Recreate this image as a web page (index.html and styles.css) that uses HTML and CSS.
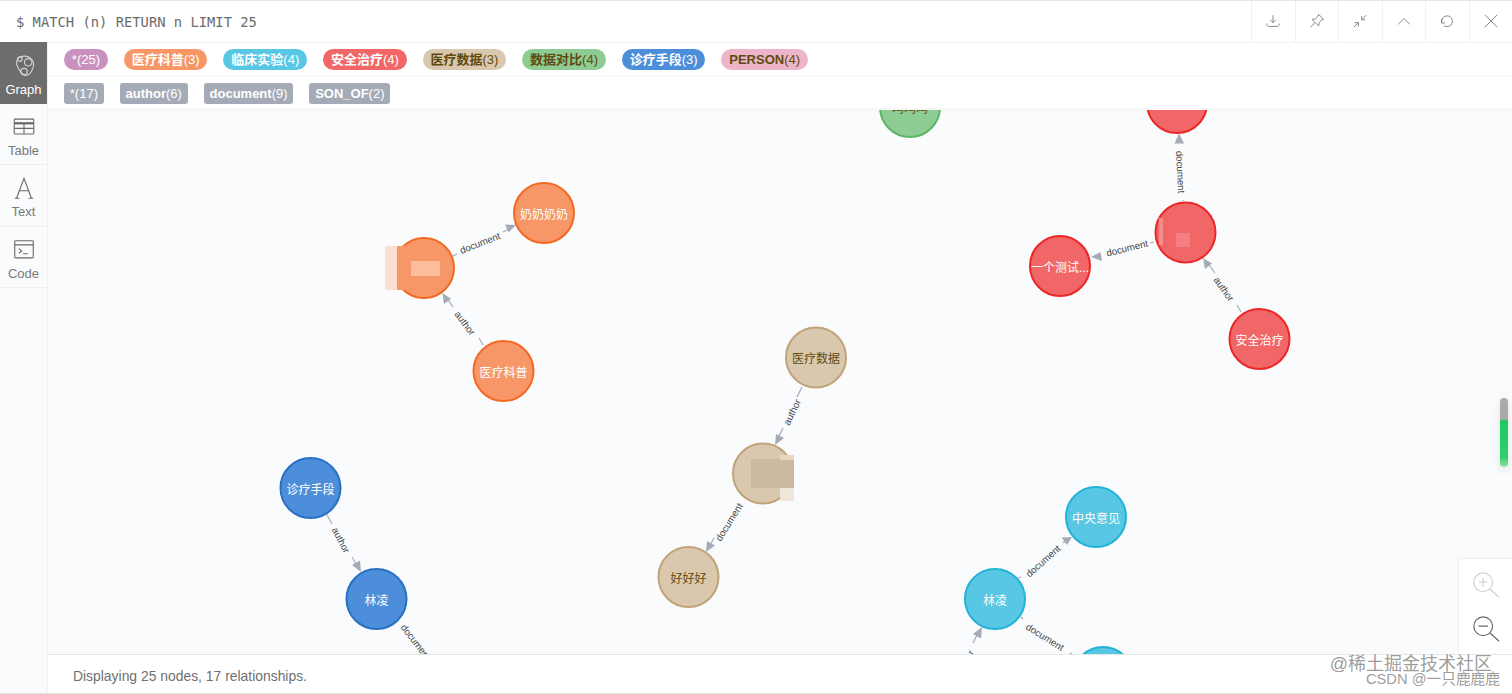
FILE: index.html
```html
<!DOCTYPE html>
<html lang="en">
<head>
    <meta charset="UTF-8">
    <meta name="viewport" content="width=device-width, initial-scale=1.0">
    <title>Neo4j Browser</title>
    <link rel="stylesheet" href="styles.css">
</head>
<body>
    <div class="frame">
        <!-- Query bar -->
        <header class="query-bar">
            <div class="query-text">$ MATCH (n) RETURN n LIMIT 25</div>
            <div class="query-actions">
                <button class="action"><svg viewBox="0 0 24 24"><path d="M12 5v9M8.500 10.500 12 14l3.500-3.500M4.500 15c0 2.500 1 3.500 3 3.500h9c2 0 3-1 3-3.500"/></svg></button>
                <button class="action"><svg viewBox="0 0 24 24"><path d="M14 4l6 6-2 .5-3.500 3.500-.5 4-8-8 4-.5L13.500 6zM9 14.500 4.500 19.500"/></svg></button>
                <button class="action"><svg viewBox="0 0 24 24"><path d="M19.500 5 14 10.500M14 6v4.500h4.500M10 14 4.500 19.500M5.500 14H10v4.500"/></svg></button>
                <button class="action"><svg viewBox="0 0 24 24"><path d="M5 16l7-7 7 7"/></svg></button>
                <button class="action"><svg viewBox="0 0 24 24"><path d="M5.800 14a6.500 6.500 0 1 1 2.500 3.600M5.500 9.500v5h4"/></svg></button>
                <button class="action"><svg viewBox="0 0 24 24"><path d="M4.500 4.500l15 15M19.500 4.500l-15 15"/></svg></button>
            </div>
        </header>

        <div class="result">
            <!-- View tabs -->
            <nav class="tabs">
                <div class="tab active">
                    <svg viewBox="0 0 28 28"><path d="M9 4.500c4-1.500 9-1.500 12 1 3 2.500 4 7 2.500 11-1 3-3.500 7-7 7.500-3 .5-5-2-7-5-2-3-4-6-3.500-9.500C6.500 7.500 7 5.500 9 4.500z"/><circle cx="18.500" cy="10" r="4"/><circle cx="14" cy="20" r="3.500"/><circle cx="9.500" cy="6.500" r="2.500"/></svg>
                    <span>Graph</span>
                </div>
                <div class="tab">
                    <svg viewBox="0 0 28 28"><rect x="3.500" y="5.500" width="21" height="16" rx="1"/><path class="thick" d="M3.500 10h21"/><path d="M3.500 15.500h21M14 10v11.500"/></svg>
                    <span>Table</span>
                </div>
                <div class="tab">
                    <svg viewBox="0 0 28 28"><path d="M6 25 14 3.500 22 25M9 17h10M4 25h5M19 25h5"/></svg>
                    <span>Text</span>
                </div>
                <div class="tab">
                    <svg viewBox="0 0 28 28"><rect x="4" y="4" width="20" height="18.500" rx="1"/><path d="M4 8.500h20M8.500 12.500l3 2.500-3 2.500M13 18h5"/></svg>
                    <span>Code</span>
                </div>
            </nav>

            <div class="viz">
                <!-- Legend -->
                <div class="legend-row">
                    <span class="pill purple">*(25)</span>
                    <span class="pill orange"><b>医疗科普</b>(3)</span>
                    <span class="pill cyan"><b>临床实验</b>(4)</span>
                    <span class="pill red"><b>安全治疗</b>(4)</span>
                    <span class="pill tan"><b>医疗数据</b>(3)</span>
                    <span class="pill green"><b>数据对比</b>(4)</span>
                    <span class="pill blue"><b>诊疗手段</b>(3)</span>
                    <span class="pill pink"><b>PERSON</b>(4)</span>
                </div>
                <div class="legend-row">
                    <span class="tag">*(17)</span>
                    <span class="tag"><b>author</b>(6)</span>
                    <span class="tag"><b>document</b>(9)</span>
                    <span class="tag"><b>SON_OF</b>(2)</span>
                </div>

                <!-- Graph canvas, coordinates are window pixels -->
                <div class="canvas">
                    <svg class="graph" viewBox="48 110 1464 544">
                        <g class="edges">
                            <path d="M453 256l4-2M503 232l6-3"/>
                            <path d="M483 345l-4-7M453 307l-7-10"/>
                            <path d="M1183 200v1M1179 143v-5"/>
                            <path d="M1150 243l4-1M1100 255l-5 1"/>
                            <path d="M1241 312l-4-7M1215 273l-8-11"/>
                            <path d="M802 387l-5 10M783 428l-6 12"/>
                            <path d="M741 504l-1 1M714 538l-5 9"/>
                            <path d="M327 515l5 9M352 557l6 10"/>
                            <path d="M1018 578l3-1M1063 543l5-4"/>
                            <path d="M1021 617l2 2M1070 653l2 1"/>
                            <path d="M973 643l5-10"/>
                        </g>
                        <g class="arrows">
                            <path d="M516 225 505 224.500 508.500 232.500z"/>
                            <path d="M442.500 293 444 304 451 299z"/>
                            <path d="M1179 133.500 1174.500 143.500 1184 143.500z"/>
                            <path d="M1091 257 1100.500 252 1102 261z"/>
                            <path d="M1203 258 1205 269 1212 263.500z"/>
                            <path d="M775 445 776 434 784 438z"/>
                            <path d="M706 552 707 541 715 545.500z"/>
                            <path d="M361 572 352 565 360 560.500z"/>
                            <path d="M1072 537 1061.500 537.500 1067 545z"/>
                            <path d="M982 627 973 634 981 638.500z"/>
                        </g>
                        <g class="rel-labels">
                            <text transform="translate(480 243) rotate(-21)">document</text>
                            <text transform="translate(465 323) rotate(53)">author</text>
                            <text transform="translate(1180.500 172) rotate(87)">document</text>
                            <text transform="translate(1127 248) rotate(-14)">document</text>
                            <text transform="translate(1224 289) rotate(55)">author</text>
                            <text transform="translate(792 412) rotate(-64)">author</text>
                            <text transform="translate(729 522) rotate(-58)">document</text>
                            <text transform="translate(341 540) rotate(62)">author</text>
                            <text transform="translate(416 642) rotate(52)">document</text>
                            <text transform="translate(1043 561) rotate(-42)">document</text>
                            <text transform="translate(1045 637) rotate(32)">document</text>
                            <text transform="translate(965 663) rotate(-63)">author</text>
                        </g>

                        <g class="node green-node"><circle cx="910" cy="107" r="30"/><text x="910" y="107">吗吗吗</text></g>

                        <g class="node orange-node"><circle cx="424" cy="268" r="30"/></g>
                        <g class="node orange-node"><circle cx="544" cy="213" r="30"/><text x="544" y="213">奶奶奶奶</text></g>
                        <g class="node orange-node"><circle cx="503.500" cy="371" r="30"/><text x="503.500" y="371">医疗科普</text></g>
                        <rect class="blur" x="385" y="246" width="12" height="44" fill="#f9e0d2"/>
                        <rect class="blur" x="397" y="246" width="14" height="44" fill="#f79767"/>
                        <rect class="blur" x="411" y="261" width="29" height="15" fill="#fbbd9c"/>

                        <g class="node red-node"><circle cx="1177" cy="103" r="30"/></g>
                        <g class="node red-node"><circle cx="1185.500" cy="232.500" r="30"/></g>
                        <g class="node red-node"><circle cx="1060" cy="266" r="30"/><text x="1060" y="266">一个测试...</text></g>
                        <g class="node red-node"><circle cx="1259.500" cy="339" r="30"/><text x="1259.500" y="339">安全治疗</text></g>
                        <rect class="blur" x="1176" y="233" width="14" height="14" fill="#f47e80"/>
                        <rect class="blur" x="1159" y="218" width="4" height="27" fill="#f58d8e"/>

                        <g class="node tan-node"><circle cx="816" cy="357.500" r="30"/><text x="816" y="357.500">医疗数据</text></g>
                        <g class="node tan-node"><circle cx="763" cy="473.500" r="30"/></g>
                        <g class="node tan-node"><circle cx="688.500" cy="577" r="30"/><text x="688.500" y="577">好好好</text></g>
                        <rect class="blur" x="751" y="459" width="43" height="29" fill="#ccb99f"/>
                        <rect class="blur" x="780" y="455" width="14" height="5" fill="#e4d7c3"/>
                        <rect class="blur" x="780" y="488" width="14" height="13" fill="#efe7da"/>

                        <g class="node blue-node"><circle cx="310.500" cy="488" r="30"/><text x="310.500" y="488">诊疗手段</text></g>
                        <g class="node blue-node"><circle cx="376.500" cy="599" r="30"/><text x="376.500" y="599">林凌</text></g>

                        <g class="node cyan-node"><circle cx="1096" cy="517" r="30"/><text x="1096" y="517">中央意见</text></g>
                        <g class="node cyan-node"><circle cx="995" cy="599" r="30"/><text x="995" y="599">林凌</text></g>
                        <g class="node cyan-node"><circle cx="1103" cy="677" r="30"/></g>
                    </svg>

                    <div class="thumb"></div>

                    <div class="zoom-box">
                        <svg class="zoom-icon off" viewBox="0 0 32 32"><circle cx="13" cy="13" r="10"/><path d="M20.500 20.500 30 29M8.500 13h9M13 8.500v9"/></svg>
                        <svg class="zoom-icon" viewBox="0 0 32 32"><circle cx="13" cy="13" r="10"/><path d="M20.500 20.500 30 29M8 13h10"/></svg>
                    </div>
                </div>

                <footer class="status">Displaying 25 nodes, 17 relationships.</footer>
            </div>
        </div>

        <div class="watermark">
            <div class="mark-big">@稀土掘金技术社区</div>
            <div class="mark-small">CSDN @一只鹿鹿鹿</div>
        </div>
    </div>
</body>
</html>
```

FILE: styles.css
```css
* {
    box-sizing: border-box;
}
html, body {
    margin: 0;
    height: 100%;
    overflow: hidden;
}
body {
    font-family: "Liberation Sans", "Noto Sans CJK SC", sans-serif;
    color: #666;
    background-color: #fff;
}
.frame {
    position: relative;
    display: flex;
    flex-direction: column;
    height: 694px;
    border-bottom: 1px solid #e3e3e3;
}
.query-bar {
    display: flex;
    justify-content: space-between;
    height: 43px;
    flex-shrink: 0;
    border-top: 1px solid #e6e6e6;
    border-bottom: 1px solid #eef0f2;
}
.query-text {
    padding-left: 16px;
    line-height: 42px;
    font-family: "DejaVu Sans Mono", monospace;
    font-size: 13.8px;
    color: #6b6b6b;
}
.query-actions {
    display: flex;
}
.action {
    width: 43.5px;
    padding: 0 0 2px;
    border: none;
    border-left: 1px solid #eef0f2;
    background: #fff;
    display: flex;
    align-items: center;
    justify-content: center;
}
.action svg {
    width: 20px;
    height: 20px;
    fill: none;
    stroke: #8a8a8a;
    stroke-width: 1.2;
}
.result {
    display: flex;
    flex: 1;
    min-height: 0;
}
.tabs {
    width: 48px;
    flex-shrink: 0;
    margin-top: -1px;
    background-color: #f9fbfd;
    border-right: 1px solid #eef0f2;
}
.tab {
    height: 61.5px;
    padding-top: 4px;
    border-bottom: 1.5px solid #eef0f2;
    display: flex;
    flex-direction: column;
    align-items: center;
    justify-content: center;
    gap: 3px;
    font-size: 13px;
    color: #7a7a7a;
}
.tab svg {
    width: 26px;
    height: 26px;
    fill: none;
    stroke: #6a6a6a;
    stroke-width: 1.2;
}
.tab .thick {
    stroke-width: 2.5;
}
.tab.active {
    background-color: #6d6d6d;
    color: #fff;
    border-bottom: none;
}
.tab.active svg {
    stroke: #d4d4d4;
}
.viz {
    flex: 1;
    min-width: 0;
    display: flex;
    flex-direction: column;
}
.legend-row {
    display: flex;
    align-items: center;
    gap: 16px;
    height: 33.5px;
    padding: 2px 0 0 16px;
    border-bottom: 2px solid #f5f7f9;
    flex-shrink: 0;
    font-size: 13px;
}
.pill, .tag {
    height: 21px;
    line-height: 21px;
    white-space: nowrap;
}
.pill {
    padding: 0 7.85px;
    border-radius: 11px;
    color: #fff;
}
.tag {
    padding: 0 5.8px;
    border-radius: 3px;
    background-color: #a5abb6;
    color: #fff;
}
.purple { background-color: #c990c0; }
.orange { background-color: #f79767; }
.cyan { background-color: #57c7e3; }
.red { background-color: #f16667; }
.tan { background-color: #d9c8ae; color: #604a0e; }
.green { background-color: #8dcc93; color: #604a0e; }
.blue { background-color: #4c8eda; }
.pink { background-color: #ecb5c9; color: #604a0e; }
.canvas {
    position: relative;
    flex: 1;
    min-height: 0;
    overflow: hidden;
    background-color: #f9fbfd;
}
.graph {
    position: absolute;
    left: 0;
    top: 0;
    width: 1464px;
    height: 544px;
}
.edges path {
    fill: none;
    stroke: #a5abb6;
    stroke-width: 1.2;
}
.arrows path {
    fill: #a5abb6;
}
.rel-labels text {
    font-size: 9.7px;
    fill: #444;
    text-anchor: middle;
    dominant-baseline: central;
}
.node circle {
    stroke-width: 2;
}
.node text {
    font-size: 12px;
    fill: #fff;
    text-anchor: middle;
    dominant-baseline: central;
    transform: translateY(1.5px);
}
.blur {
    filter: blur(0.7px);
}
.orange-node circle { fill: #f79767; stroke: #f36924; }
.red-node circle { fill: #f16667; stroke: #eb2728; }
.tan-node circle { fill: #d9c8ae; stroke: #c0a378; }
.tan-node text, .green-node text { fill: #604a0e; }
.green-node circle { fill: #8dcc93; stroke: #5db665; }
.blue-node circle { fill: #4c8eda; stroke: #2870c2; }
.cyan-node circle { fill: #57c7e3; stroke: #23b3d7; }
.thumb {
    position: absolute;
    right: 4px;
    top: 288px;
    width: 8px;
    height: 69px;
    border-radius: 4px;
    background: linear-gradient(#a9a9a9 0, #a9a9a9 31%, #1fc85f 33%, #2ed06e 85%, #8fe3a5 100%);
    box-shadow: 0 3px 8px rgba(0, 0, 0, 0.1);
}
.zoom-box {
    position: absolute;
    right: 0;
    bottom: 0;
    width: 54px;
    height: 96px;
    background-color: #fff;
    border-left: 1px solid #eef0f2;
    border-top: 1px solid #eef0f2;
    display: flex;
    flex-direction: column;
    align-items: center;
    justify-content: center;
    gap: 14px;
}
.zoom-icon {
    width: 30px;
    height: 30px;
    fill: none;
    stroke: #6a6a6a;
    stroke-width: 1.3;
}
.zoom-icon.off {
    stroke: #d2d2d2;
}
.status {
    height: 39px;
    flex-shrink: 0;
    padding-left: 25px;
    line-height: 42px;
    border-top: 1px solid #e6e6e6;
    background-color: #fff;
    font-size: 13.9px;
    color: #6f6f6f;
}
.watermark {
    position: absolute;
    right: 12px;
    bottom: 9px;
    text-align: right;
    color: rgba(100, 100, 100, 0.65);
}
.mark-big {
    font-size: 18px;
    line-height: 18px;
    margin-right: 8px;
    margin-bottom: 1px;
}
.mark-small {
    font-size: 14.7px;
    line-height: 10px;
}
```
